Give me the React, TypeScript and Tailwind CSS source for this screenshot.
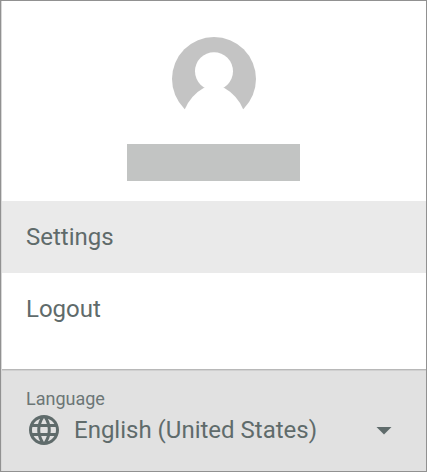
function Avatar() {
  return (
    <svg width="84" height="84" viewBox="0 0 84 84" className="block" aria-hidden="true">
      <circle cx="42" cy="42" r="42" fill="#c4c4c4" />
      <circle cx="42" cy="34.2" r="19" fill="#fff" />
      <path d="M12.7 72.4Q18.8 58 32.4 50.4H51.6Q65.2 58 71.3 72.4V84H12.7z" fill="#fff" />
    </svg>
  );
}

function Globe() {
  return (
    <svg width="36" height="36" viewBox="0 0 24 24" fill="currentColor" className="block shrink-0" aria-hidden="true">
      <path d="M11.99 2C6.47 2 2 6.48 2 12s4.47 10 9.99 10C17.52 22 22 17.52 22 12S17.52 2 11.99 2zm6.93 6h-2.95c-.32-1.25-.78-2.45-1.38-3.56 1.84.63 3.37 1.91 4.33 3.56zM12 4.04c.83 1.2 1.48 2.53 1.91 3.96h-3.82c.43-1.43 1.08-2.76 1.91-3.96zM4.26 14C4.1 13.36 4 12.69 4 12s.1-1.36.26-2h3.38c-.08.66-.14 1.32-.14 2s.06 1.34.14 2H4.26zm.82 2h2.95c.32 1.25.78 2.45 1.38 3.56-1.84-.63-3.37-1.9-4.33-3.56zm2.95-8H5.08c.96-1.66 2.49-2.93 4.33-3.56C8.81 5.55 8.35 6.75 8.03 8zM12 19.96c-.83-1.2-1.48-2.53-1.91-3.96h3.82c-.43 1.43-1.08 2.76-1.91 3.96zM14.34 14H9.66c-.09-.66-.16-1.32-.16-2s.07-1.35.16-2h4.68c.09.65.16 1.32.16 2s-.07 1.34-.16 2zm.25 5.56c.6-1.11 1.06-2.31 1.38-3.56h2.95c-.96 1.65-2.49 2.93-4.33 3.56zM16.36 14c.08-.66.14-1.32.14-2s-.06-1.34-.14-2h3.38c.16.64.26 1.31.26 2s-.1 1.36-.26 2h-3.38z" />
    </svg>
  );
}

export default function App() {
  return (
    <div className="flex h-[472px] w-[427px] flex-col border border-[#919191] bg-white font-['Roboto',sans-serif] text-2xl text-[#5f6b6b]">
      <div className="flex grow flex-col border-l border-[#d8d8d8]">
        <header className="flex h-[200px] flex-col items-center pt-9">
          <Avatar />
          <div className="mr-px mt-[23px] h-[37px] w-[173px] bg-[#c2c4c3]" />
        </header>
        <nav className="flex h-[168px] flex-col font-[370]">
          <button className="flex h-[72px] items-center bg-[#eaeaea] pl-6 text-left">Settings</button>
          <button className="flex h-[72px] items-center pl-6 text-left">Logout</button>
        </nav>
        <section className="flex grow flex-col border-t border-[#b8b8b8] bg-[#e1e1e1] pl-6 pr-6 pt-[17px] font-[370] shadow-[inset_0_1px_0_#d0d0d0]">
          <div className="h-[25px] text-lg leading-6 text-[#6c7676]">Language</div>
          <button className="flex h-9 items-center text-left">
            <Globe />
            <span className="ml-3 grow">English (United States)</span>
            <svg width="36" height="36" viewBox="0 0 24 24" fill="currentColor" className="block" aria-hidden="true">
              <path d="M7 10l5 5 5-5z" />
            </svg>
          </button>
        </section>
      </div>
    </div>
  );
}
